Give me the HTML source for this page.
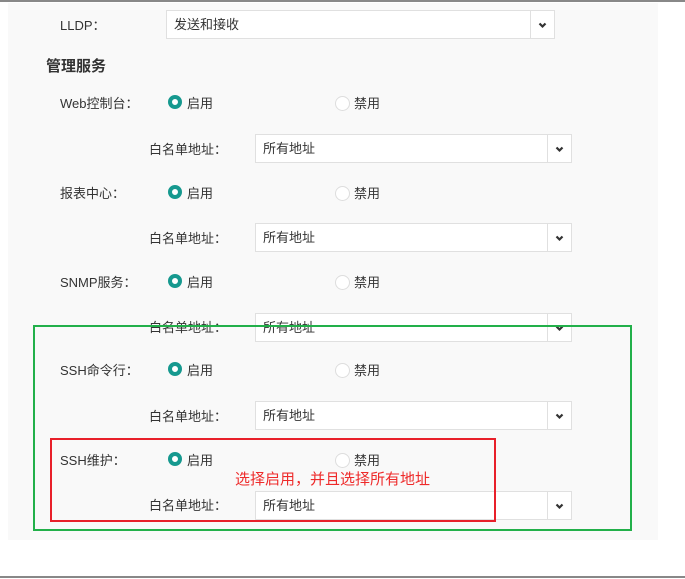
<!DOCTYPE html><html><head><meta charset="utf-8"><style>
body{margin:0;width:685px;height:579px;background:#fff;position:relative;overflow:hidden;font-family:"Liberation Sans","Noto Sans CJK SC",sans-serif;font-size:13px;color:#333}
.a{position:absolute}
.panel{left:8px;top:3px;width:650px;height:537px;background:#f9f9f9}
.sel{position:absolute;background:#fff;border:1px solid #e0e0e0;box-sizing:border-box;height:29px;line-height:27px;padding-left:7px}
.sel .ar{position:absolute;right:0;top:0;width:23px;height:27px;border-left:1px solid #e0e0e0;text-align:center}
.lbl{position:absolute;line-height:16px}
.rad{position:absolute;width:6px;height:6px;border-radius:50%;border:4px solid #16998f;background:#fff}
.radd{position:absolute;width:13px;height:13px;border-radius:50%;border:1px solid #ddd;background:#fff}
</style></head><body>
<div class="a" style="left:0;top:0;width:685px;height:2px;background:#888"></div>
<div class="a" style="left:0;top:576px;width:685px;height:2px;background:#888"></div>
<div class="a panel"></div>
<div class="lbl" style="left:60px;top:18px">LLDP：</div>
<div class="sel" style="left:166px;top:10px;width:389px">发送和接收<div class="ar"><svg width="9" height="7" viewBox="0 0 9 7" style="margin-top:10px"><path d="M1.5 1.5L4.5 4.5L7.5 1.5" stroke="#333" stroke-width="2.2" fill="none"/></svg></div></div>
<div class="lbl" style="left:46px;top:59px;font-size:15px;font-weight:bold;color:#333">管理服务</div>

<div class="lbl" style="left:60px;top:96px">Web控制台：</div>
<div class="rad" style="left:168px;top:95px"></div><div class="lbl" style="left:187px;top:96px">启用</div>
<div class="radd" style="left:335px;top:96px"></div><div class="lbl" style="left:354px;top:96px">禁用</div>
<div class="lbl" style="left:149px;top:142px">白名单地址：</div>
<div class="sel" style="left:255px;top:134px;width:317px">所有地址<div class="ar"><svg width="9" height="7" viewBox="0 0 9 7" style="margin-top:10px"><path d="M1.5 1.5L4.5 4.5L7.5 1.5" stroke="#333" stroke-width="2.2" fill="none"/></svg></div></div>

<div class="lbl" style="left:60px;top:186px">报表中心：</div>
<div class="rad" style="left:168px;top:185px"></div><div class="lbl" style="left:187px;top:186px">启用</div>
<div class="radd" style="left:335px;top:186px"></div><div class="lbl" style="left:354px;top:186px">禁用</div>
<div class="lbl" style="left:149px;top:231px">白名单地址：</div>
<div class="sel" style="left:255px;top:223px;width:317px">所有地址<div class="ar"><svg width="9" height="7" viewBox="0 0 9 7" style="margin-top:10px"><path d="M1.5 1.5L4.5 4.5L7.5 1.5" stroke="#333" stroke-width="2.2" fill="none"/></svg></div></div>

<div class="lbl" style="left:60px;top:275px">SNMP服务：</div>
<div class="rad" style="left:168px;top:274px"></div><div class="lbl" style="left:187px;top:275px">启用</div>
<div class="radd" style="left:335px;top:275px"></div><div class="lbl" style="left:354px;top:275px">禁用</div>
<div class="lbl" style="left:149px;top:320px">白名单地址：</div>
<div class="sel" style="left:255px;top:313px;width:317px">所有地址<div class="ar"><svg width="9" height="7" viewBox="0 0 9 7" style="margin-top:10px"><path d="M1.5 1.5L4.5 4.5L7.5 1.5" stroke="#333" stroke-width="2.2" fill="none"/></svg></div></div>

<div class="lbl" style="left:60px;top:363px">SSH命令行：</div>
<div class="rad" style="left:168px;top:362px"></div><div class="lbl" style="left:187px;top:363px">启用</div>
<div class="radd" style="left:335px;top:363px"></div><div class="lbl" style="left:354px;top:363px">禁用</div>
<div class="lbl" style="left:149px;top:409px">白名单地址：</div>
<div class="sel" style="left:255px;top:401px;width:317px">所有地址<div class="ar"><svg width="9" height="7" viewBox="0 0 9 7" style="margin-top:10px"><path d="M1.5 1.5L4.5 4.5L7.5 1.5" stroke="#333" stroke-width="2.2" fill="none"/></svg></div></div>

<div class="lbl" style="left:60px;top:453px">SSH维护：</div>
<div class="rad" style="left:168px;top:452px"></div><div class="lbl" style="left:187px;top:453px">启用</div>
<div class="radd" style="left:335px;top:453px"></div><div class="lbl" style="left:354px;top:453px">禁用</div>
<div class="lbl" style="left:149px;top:498px">白名单地址：</div>
<div class="sel" style="left:255px;top:491px;width:317px">所有地址<div class="ar"><svg width="9" height="7" viewBox="0 0 9 7" style="margin-top:10px"><path d="M1.5 1.5L4.5 4.5L7.5 1.5" stroke="#333" stroke-width="2.2" fill="none"/></svg></div></div>

<div class="a" style="left:33px;top:325px;width:595px;height:202px;border:2px solid #22b04a"></div>
<div class="a" style="left:50px;top:438px;width:442px;height:80px;border:2px solid #e8202a"></div>
<div class="lbl" style="left:235px;top:471px;font-size:15px;line-height:18px;color:#ee2a2a">选择启用，并且选择所有地址</div>
</body></html>
